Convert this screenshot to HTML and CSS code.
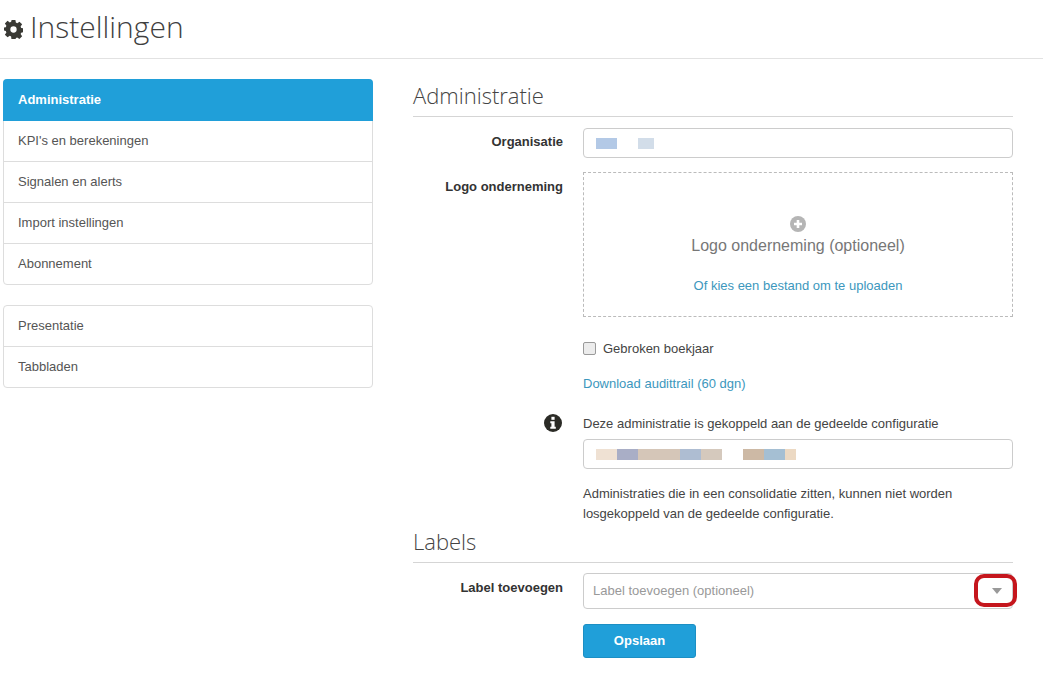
FILE: index.html
```html
<!DOCTYPE html>
<html lang="nl">
<head>
<meta charset="utf-8">
<title>Instellingen</title>
<link rel="stylesheet" href="styles.css">
</head>
<body>
<header class="page-header">
  <svg class="gear" viewBox="0 0 24 24" aria-hidden="true"><path fill-rule="evenodd" d="M9.600 0h4.800l.6 3.300 1.700.7 2.800-1.900 3.400 3.400-1.900 2.800.7 1.700 3.300.6v4.800l-3.300.6-.7 1.700 1.900 2.800-3.400 3.400-2.800-1.900-1.700.7-.6 3.300H9.600L9 20.700 7.300 20l-2.800 1.900-3.400-3.400L3 15.700 2.300 14 0 13.400V9.600L2.300 9 3 7.300 1.100 4.500 4.500 1.100 7.300 3 9 2.300zM12 8a4 4 0 1 0 0 8 4 4 0 0 0 0-8z"/></svg>
  <h1>Instellingen</h1>
</header>
<div class="layout">
  <nav class="sidebar">
    <ul class="menu">
      <li class="active">Administratie</li>
      <li>KPI's en berekeningen</li>
      <li>Signalen en alerts</li>
      <li>Import instellingen</li>
      <li>Abonnement</li>
    </ul>
    <ul class="menu">
      <li>Presentatie</li>
      <li>Tabbladen</li>
    </ul>
  </nav>
  <main class="content">
    <h2>Administratie</h2>
    <div class="row row-org">
      <label>Organisatie</label>
      <div class="field input">
        <span class="blur" style="width:21px;background:#b3c9e6"></span><span class="gap" style="width:21px"></span><span class="blur" style="width:16px;background:#d2dde9"></span>
      </div>
    </div>
    <div class="row row-logo">
      <label>Logo onderneming</label>
      <div class="field dropzone">
        <svg class="plus" viewBox="0 0 16 16" aria-hidden="true"><circle cx="8" cy="8" r="8" fill="#b5b5b5"/><path d="M8 4v8M4 8h8" stroke="#fff" stroke-width="2.6"/></svg>
        <div class="drop-title">Logo onderneming (optioneel)</div>
        <a class="link drop-link">Of kies een bestand om te uploaden</a>
      </div>
    </div>
    <div class="row row-check">
      <label></label>
      <div class="field check"><span class="box"></span>Gebroken boekjaar</div>
    </div>
    <div class="row row-audit">
      <label></label>
      <div class="field"><a class="link">Download audittrail (60 dgn)</a></div>
    </div>
    <div class="row row-shared">
      <label class="info-label">
        <svg class="info" viewBox="0 0 18 18" aria-hidden="true"><circle cx="9" cy="9" r="9" fill="#2b2b26"/><rect x="7.400" y="2.800" width="3.200" height="3" fill="#fff"/><path d="M6.300 7.200h4.300v5.600h1.200v2H6.300v-2h1.100V9.200H6.300z" fill="#fff"/></svg>
      </label>
      <div class="field">
        <div class="shared-text">Deze administratie is gekoppeld aan de gedeelde configuratie</div>
        <div class="input">
          <span class="blur" style="width:21px;background:#efe1d3"></span><span class="blur" style="width:21px;background:#a9aec6"></span><span class="blur" style="width:42px;background:#d5c6b8"></span><span class="blur" style="width:21px;background:#aebdd2"></span><span class="blur" style="width:21px;background:#d5c9bd"></span><span class="gap" style="width:21px"></span><span class="blur" style="width:21px;background:#cdb9a5"></span><span class="blur" style="width:21px;background:#a5bfd3"></span><span class="blur" style="width:11px;background:#ecd9c3"></span>
        </div>
        <p class="note">Administraties die in een consolidatie zitten, kunnen niet worden<br>losgekoppeld van de gedeelde configuratie.</p>
      </div>
    </div>
    <h2 class="labels-title">Labels</h2>
    <div class="row row-select">
      <label>Label toevoegen</label>
      <div class="field select">
        <span class="placeholder">Label toevoegen (optioneel)</span>
        <span class="caret"></span>
        <span class="highlight"></span>
      </div>
    </div>
    <div class="row row-save">
      <label></label>
      <div class="field"><button class="save" type="button">Opslaan</button></div>
    </div>
  </main>
</div>
</body>
</html>
```
FILE: styles.css
```css
* { box-sizing: border-box; }
html, body { margin: 0; padding: 0; background: #fff; }
body {
  font-family: "Liberation Sans", Arial, sans-serif;
  font-size: 13px;
  line-height: 22px;
  color: #444;
  height: 679px;
  overflow: hidden;
}
.page-header {
  height: 59px;
  border-bottom: 1px solid #e2e2e2;
  display: flex;
  align-items: center;
  padding: 0 0 5px 4px;
  margin-right: 1px;
  gap: 7px;
}
.gear { width: 19px; height: 19px; fill: #3a3a35; margin-top: 6px; }
h1 {
  margin: 0;
  font: 300 30px/40px "Open Sans", sans-serif;
  color: #3f3f3f;
}
.layout {
  display: flex;
  padding: 20px 0 0 3px;
}
.sidebar { width: 370px; flex: none; }
.menu {
  list-style: none;
  margin: 0 0 20px;
  padding: 0;
  border: 1px solid #ddd;
  border-radius: 4px;
}
.menu li {
  height: 41px;
  line-height: 40px;
  padding-left: 14px;
  border-top: 1px solid #ddd;
  color: #555;
}
.menu li:first-child { border-top: 0; height: 40px; }
.menu li.active {
  background: #209fd9;
  color: #fff;
  font-weight: 700;
  margin: -1px -1px 0;
  height: 42px;
  line-height: 41px;
  padding-left: 15px;
  border-radius: 4px 4px 0 0;
}
.menu li.active + li { border-top: 0; height: 40px; }
.content { width: 600px; margin-left: 40px; flex: none; }
h2 {
  margin: 0;
  font: 300 22px/30px "Open Sans", sans-serif;
  color: #444;
  height: 38px;
  padding-top: 1px;
  border-bottom: 1px solid #d5d5d5;
}
.row { display: flex; }
.row > label {
  width: 150px;
  flex: none;
  text-align: right;
  font-weight: 700;
  color: #333;
}
.field { width: 430px; margin-left: 20px; flex: none; }
.input {
  height: 30px;
  border: 1px solid #ccc;
  border-radius: 4px;
  display: flex;
  align-items: center;
  padding-left: 12px;
}
.blur { height: 11px; display: block; }
.gap { display: block; }
.row-org { margin-top: 11px; }
.row-org > label { line-height: 28px; }
.row-logo { margin-top: 14px; }
.row-logo > label { line-height: 30px; }
.dropzone {
  height: 145px;
  border: 1px dashed #bbb;
  display: flex;
  flex-direction: column;
  align-items: center;
  padding-top: 43px;
}
.plus { width: 16px; height: 16px; display: block; }
.drop-title { font-size: 16px; line-height: 22px; color: #777; margin-top: 3px; }
.link { color: #3c97bd; }
.drop-link { margin-top: 18px; }
.row-check { margin-top: 21px; }
.check { display: flex; align-items: center; gap: 7px; color: #444; }
.box {
  width: 13px; height: 13px;
  border: 1px solid #9a9a9a;
  border-radius: 2px;
  background: #ececec;
  margin-bottom: 2px;
}
.row-audit { margin-top: 13px; }
.row-shared { margin-top: 18px; }
.info-label { display: flex; justify-content: flex-end; padding: 1px 1px 0 0; }
.info { width: 18px; height: 18px; }
.shared-text { height: 26px; }
.note { margin: 15px 0 0; color: #444; line-height: 20px; }
.labels-title { margin-top: 0; height: 39px; padding-top: 2px; }
.row-select { margin-top: 10px; }
.row-select > label { line-height: 30px; }
.select {
  height: 36px;
  border: 1px solid #ccc;
  border-radius: 4px;
  position: relative;
  display: flex;
  align-items: center;
  padding: 0 10px 0 9px;
  justify-content: space-between;
}
.placeholder { color: #999; }
.caret {
  width: 0; height: 0;
  border-left: 5px solid transparent;
  border-right: 5px solid transparent;
  border-top: 6px solid #999;
}
.highlight {
  position: absolute;
  left: 390px; top: 0;
  width: 43px; height: 33px;
  border: 4px solid #c5161d;
  border-radius: 10px;
}
.row-save { margin-top: 15px; }
.save {
  width: 113px;
  height: 34px;
  border: 1px solid #1c8fc4;
  border-radius: 3px;
  background: #209fd9;
  color: #fff;
  font: 700 13px "Liberation Sans", sans-serif;
  padding: 0 0 2px;
}
```
